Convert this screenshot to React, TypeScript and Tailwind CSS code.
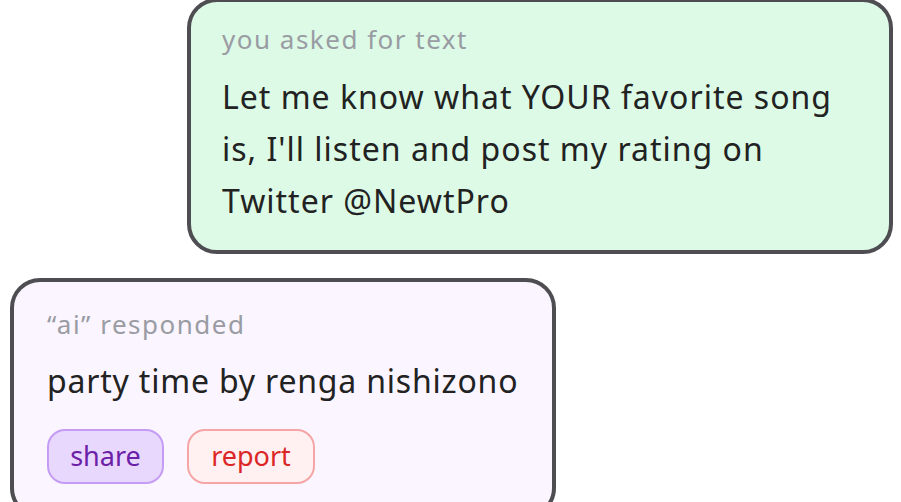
import React from 'react';

const font = { fontFamily: '"Noto Sans", "Open Sans", sans-serif' };

const Bubble: React.FC<{ label: string; className: string; children: React.ReactNode }> = ({ label, className, children }) => (
    <div className={`border-4 border-[#4d4d52] rounded-[30px] ${className}`}>
        <div className="text-[26px] leading-[32px] tracking-[1.5px] text-[#9a9ca3]">{label}</div>
        {children}
    </div>
);

const App: React.FC = () => {
    return (
        <div className="w-[901px] h-[502px] overflow-hidden bg-white flex flex-col" style={font}>
            <Bubble label="you asked for text" className="self-end mr-[8px] -mt-[2px] w-[706px] bg-[#dcfae6] pl-[31px] pr-[40px] pt-[21px] pb-[23px]">
                <p className="mt-[16px] text-[32px] leading-[52px] tracking-[1px] text-[#222222]">
                    Let me know what YOUR favorite song is, I'll listen and post my rating on Twitter @NewtPro
                </p>
            </Bubble>
            <Bubble label="“ai” responded" className="self-start ml-[10px] mt-[24px] w-[546px] bg-[#faf5ff] pl-[33px] pr-[24px] pt-[26px] pb-[30px]">
                <p className="mt-[15px] text-[32px] leading-[52px] tracking-[0.8px] text-[#222222]">party time by renga nishizono</p>
                <div className="mt-[22px] flex gap-[23px]">
                    <button className="h-[55px] w-[117px] rounded-[18px] border-2 border-[#c49cf5] bg-[#e9d8fd] text-[27px] text-[#6b21a8]">
                        share
                    </button>
                    <button className="h-[55px] w-[128px] rounded-[18px] border-2 border-[#f5a5a5] bg-[#fff1f1] text-[27px] text-[#dc2626]">
                        report
                    </button>
                </div>
            </Bubble>
        </div>
    );
};

export default App;
